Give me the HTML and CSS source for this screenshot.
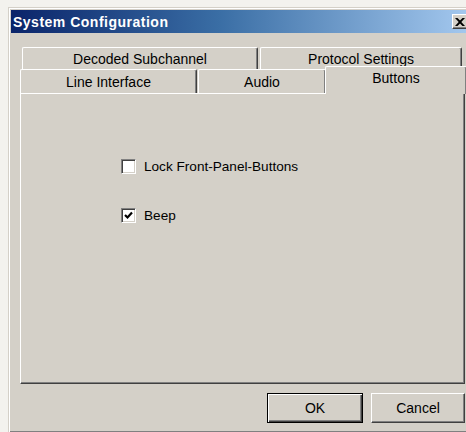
FILE: index.html
```html
<!DOCTYPE html>
<html lang="en">
<head>
<meta charset="utf-8">
<title>System Configuration</title>
<link rel="stylesheet" href="styles.css">
</head>
<body>
<div class="window">
  <div class="titlebar">
    <span class="title">System Configuration</span>
    <span class="close">
      <svg width="10" height="8" viewBox="0 0 10 8"><path d="M0 0h2.5l2.5 2.6L7.5 0H10L6.3 4 10 8H7.5L5 5.4 2.5 8H0l3.7-4z" fill="#000"/></svg>
    </span>
  </div>
  <div class="content">
    <div class="tabs">
      <div class="tabrow back">
        <div class="tab w-decoded">Decoded Subchannel</div>
        <div class="tab w-protocol">Protocol Settings</div>
      </div>
      <div class="tabrow front">
        <div class="tab w-line">Line Interface</div>
        <div class="tab w-audio">Audio</div>
        <div class="tab w-buttons selected">Buttons</div>
      </div>
    </div>
    <div class="panel">
      <label class="check">
        <span class="box"></span>
        <span class="label">Lock Front-Panel-Buttons</span>
      </label>
      <label class="check">
        <span class="box">
          <svg width="9" height="9" viewBox="0 0 9 9"><path d="M1 4l2.5 2.5L8 1.5" fill="none" stroke="#000" stroke-width="2.2"/></svg>
        </span>
        <span class="label">Beep</span>
      </label>
    </div>
    <div class="actions">
      <button class="btn btn-default">OK</button>
      <button class="btn btn-cancel">Cancel</button>
    </div>
  </div>
</div>
</body>
</html>
```
FILE: styles.css
```css
html, body {
  margin: 0;
  padding: 0;
  overflow: hidden;
  width: 466px;
  height: 432px;
  background: #f3f2ee;
  font-family: "Liberation Sans", Arial, sans-serif;
  font-size: 14px;
  color: #000;
}

/* classic dialog frame */
.window {
  margin: 7px 0 0 8px;
  width: 469px;
  height: 426px;
  box-sizing: border-box;
  background: #d4d0c8;
  border: 1px solid;
  border-color: #d4d0c8 #404040 #404040 #d4d0c8;
  box-shadow: inset 1px 1px #fff, inset -1px -1px #808080;
  padding: 2px;
  display: flex;
  flex-direction: column;
}

.titlebar {
  height: 23px;
  display: flex;
  align-items: center;
  justify-content: space-between;
  padding-left: 2px;
  background: linear-gradient(to right, #0a246a 0%, #3a6ea5 45%, #a6caf0 100%);
}

.title {
  color: #fff;
  font-weight: bold;
  font-size: 14px;
  letter-spacing: 0.5px;
}

.close {
  width: 16px;
  height: 15px;
  margin-right: 6px;
  box-sizing: border-box;
  background: #d4d0c8;
  border: 1px solid;
  border-color: #fff #404040 #404040 #fff;
  box-shadow: inset -1px -1px #808080;
  display: flex;
  align-items: center;
  justify-content: center;
}

.content {
  padding: 14px 9px 0 9px;
  width: 445px;
}

/* tab strip, two rows */
.tabrow {
  display: flex;
  gap: 1px;
}

.tabrow.back {
  margin-left: 2px;
  gap: 2px;
  height: 22px;
}

.tabrow.front {
  height: 24px;
  align-items: flex-end;
}

.tab {
  box-sizing: border-box;
  height: 100%;
  background: #d4d0c8;
  border-top: 1px solid #fff;
  border-left: 1px solid #fff;
  border-right: 1px solid #404040;
  box-shadow: inset -1px 0 #808080;
  border-radius: 2px 2px 0 0;
  display: flex;
  justify-content: center;
  padding-top: 4px;
  line-height: 16px;
}

.back .tab { padding-top: 3px; }

.w-decoded { width: 236px; }
.w-protocol { width: 202px; }
.w-line { width: 177px; }
.w-audio { width: 128px; }
.w-buttons { width: 138px; }

.tab.selected {
  position: relative;
  z-index: 1;
  height: 28px;
  width: 142px;
  margin: 0 -2px -1px -2px;
  padding-top: 3px;
}

.panel {
  box-sizing: border-box;
  height: 291px;
  background: #d4d0c8;
  border: 1px solid;
  border-color: #fff #404040 #404040 #fff;
  box-shadow: inset -1px -1px #808080;
  padding: 64px 0 0 100px;
  display: flex;
  flex-direction: column;
  gap: 33px;
}

.check {
  display: flex;
  align-items: center;
  gap: 8px;
  height: 16px;
}

.box {
  width: 15px;
  height: 15px;
  box-sizing: border-box;
  background: #fff;
  border: 1px solid;
  border-color: #808080 #fff #fff #808080;
  box-shadow: inset 1px 1px #404040, inset -1px -1px #d4d0c8;
  display: flex;
  align-items: center;
  justify-content: center;
}

.label {
  font-size: 13.6px;
}

.actions {
  display: flex;
  justify-content: flex-end;
  gap: 8px;
  margin-top: 9px;
}

.btn {
  height: 30px;
  box-sizing: border-box;
  background: #d4d0c8;
  font-family: "Liberation Sans", Arial, sans-serif;
  font-size: 14px;
  color: #000;
  padding: 0;
}

.btn-default {
  width: 96px;
  border: 1px solid #000;
  box-shadow: inset 1px 1px #fff, inset -1px -1px #404040, inset -2px -2px #808080;
}

.btn-cancel {
  width: 94px;
  border: 1px solid;
  border-color: #fff #404040 #404040 #fff;
  box-shadow: inset -1px -1px #808080;
}
```
